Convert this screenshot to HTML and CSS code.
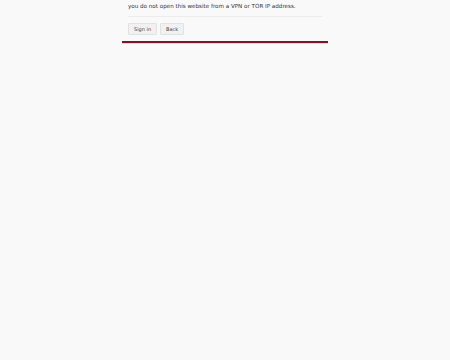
FILE: index.html
```html
<!DOCTYPE html>
<html lang="en">
<head>
    <meta charset="UTF-8">
    <meta name="viewport" content="width=device-width, initial-scale=1.0">
    <title>Sign in</title>
    <link rel="stylesheet" href="styles.css">
</head>
<body>
<div class="panel">
    <div class="notice">
        <p>For your security, please sign in only from a trusted device and make sure that<br>
        you do not open this website from a VPN or TOR IP address.</p>
    </div>
    <div class="actions">
        <button class="btn" type="button">Sign in</button>
        <button class="btn" type="button">Back</button>
    </div>
</div>
</body>
</html>
```

FILE: styles.css
```css
body {
    font-family: 'DejaVu Sans', Verdana, sans-serif;
    background-color: #f9f9f9;
    margin: 0;
    padding: 0;
    height: 100vh;
}

.panel {
    width: 206px;
    margin: -9px auto 0;
    border-bottom: 2px solid #7d1528;
    box-shadow: 0 1px 0 #f3c9d1;
}

.notice {
    margin: 0 6px;
    padding-bottom: 5px;
    border-bottom: 1px solid #ececec;
}

.notice p {
    margin: 0;
    font-size: 5.6px;
    line-height: 10px;
    color: #333;
    white-space: nowrap;
}

.actions {
    display: flex;
    gap: 3px;
    padding: 6px 6px 6px;
}

.btn {
    font-family: inherit;
    font-size: 5px;
    color: #444;
    background-color: #f1f1f1;
    border: 1px solid #e2e2e2;
    border-radius: 1px;
    padding: 2px 5px;
    height: 12px;
}
```
